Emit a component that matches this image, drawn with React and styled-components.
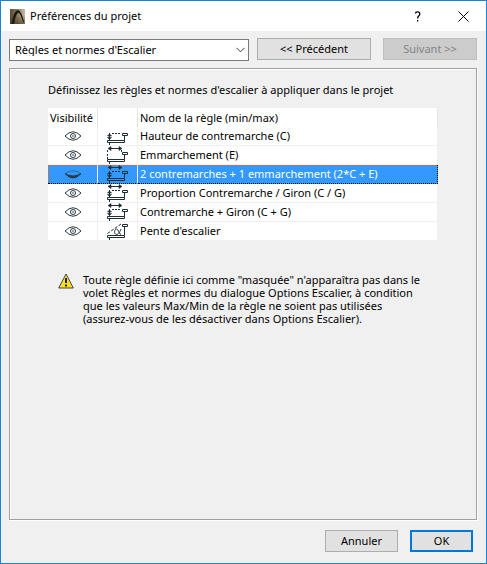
import React, { useState } from "react";
import styled, { createGlobalStyle, css } from "styled-components";

const GlobalStyle = createGlobalStyle`
  * {
    box-sizing: border-box;
  }

  body {
    margin: 0;
    color: #000;
    font-family: "Noto Sans", "Open Sans", sans-serif;
    font-size: 11px;
    line-height: 13px;
  }

  button,
  select {
    font: inherit;
    color: inherit;
  }
`;

const Window = styled.div`
  display: flex;
  flex-direction: column;
  min-height: 100vh;
  border: 1px solid #1883d7;
  background: #f0f0f0;
`;

const TitleBar = styled.header`
  display: flex;
  align-items: center;
  height: 30px;
  padding-left: 9px;
  background: #fff;
`;

const Title = styled.h1`
  flex: 1;
  margin: 0 0 0 5px;
  font-size: 11px;
  line-height: 16px;
  font-weight: 400;
`;

const CaptionButton = styled.button`
  display: flex;
  align-items: center;
  justify-content: center;
  width: 46px;
  height: 30px;
  padding: 0;
  border: 0;
  background: none;
`;

const Toolbar = styled.div`
  display: flex;
  padding: 7px 9px 0 8px;
`;

const SelectBox = styled.div`
  display: grid;
  flex: 1;
  align-items: center;
  margin: 1px 8px 0 0;

  > * {
    grid-area: 1 / 1;
  }

  svg {
    justify-self: end;
    margin-right: 4px;
    pointer-events: none;
  }
`;

const Select = styled.select`
  appearance: none;
  width: 100%;
  height: 22px;
  padding: 0 20px 2px 5px;
  border: 1px solid #7a7a7a;
  border-radius: 0;
  background: #fff;
`;

const Button = styled.button`
  width: ${(p) => p.$width}px;
  height: 22px;
  padding: 0 0 2px;
  border: ${(p) => (p.$primary ? "2px solid #0078d7" : "1px solid #adadad")};
  background: #e1e1e1;

  &:disabled {
    border-color: #bfbfbf;
    background: #ccc;
    color: #838383;
  }

  & + & {
    margin-left: 12px;
  }
`;

const Panel = styled.main`
  flex: 1;
  margin: 7px 9px 0 8px;
  padding: 14px 38px;
  border: 1px solid #a0a0a0;
  box-shadow: inset 1px 1px #fff, 1px 1px #fff;
`;

const Intro = styled.p`
  margin: 0 0 12px;
`;

const Table = styled.table`
  width: 100%;
  table-layout: fixed;
  border-collapse: separate;
  border-spacing: 0;
  background: #fff;
`;

const Head = styled.th`
  width: ${(p) => p.$width};
  height: 19px;
  padding: 0 0 0 ${(p) => p.$indent}px;
  border-right: 1px solid #e5e5e5;
  font-weight: 400;
  text-align: left;
`;

const Cell = styled.td`
  height: 19px;
  padding: 0 0 0 ${(p) => p.$indent}px;
  border-right: 1px solid #f0f0f0;
  border-bottom: 1px solid #f0f0f0;
  line-height: 18px;
  vertical-align: top;

  svg {
    display: block;
  }
`;

const selectedRow = css`
  background: #3399ff;
  color: #fff;

  ${Cell} {
    border-bottom: 1px dotted #000;
    box-shadow: inset 0 1px #997f80;
  }

  ${Cell}:first-child {
    box-shadow: inset 1px 1px #997f80;
  }

  ${Cell}:last-child {
    border-right: 1px dotted #000;
  }
`;

const Row = styled.tr`
  ${(p) => p.$selected && selectedRow}
`;

const EyeButton = styled.button`
  display: block;
  padding: 3px 0 0;
  border: 0;
  background: none;
`;

const Notice = styled.div`
  display: flex;
  gap: 9px;
  padding: 32px 0 0 10px;
`;

const NoticeText = styled.p`
  flex: 1;
  margin: 0;
  white-space: pre-line;
`;

const Footer = styled.footer`
  display: flex;
  justify-content: flex-end;
  padding: 10px 13px 11px;
`;

const RULES = [
  { id: "c", name: "Hauteur de contremarche (C)", rise: true },
  { id: "e", name: "Emmarchement (E)", run: true },
  { id: "2ce", name: "2 contremarches + 1 emmarchement (2*C + E)", rise: true, run: true },
  { id: "cg", name: "Proportion Contremarche / Giron (C / G)", rise: true, run: true },
  { id: "c+g", name: "Contremarche + Giron (C + G)", rise: true, run: true },
  { id: "slope", name: "Pente d'escalier", slope: true },
];

const NOTICE = `Toute règle définie ici comme "masquée" n'apparaîtra pas dans le
volet Règles et normes du dialogue Options Escalier, à condition
que les valeurs Max/Min de la règle ne soient pas utilisées
(assurez-vous de les désactiver dans Options Escalier).`;

function EyeIcon({ hidden }) {
  return (
    <svg width="18" height="12" viewBox="0 0 18 12" fill="none" stroke="#2b3a42">
      {hidden ? (
        <>
          <path d="M1 6Q9 -0.500 17 6" strokeWidth="0.500" />
          <path d="M1 5.500Q9 10.500 17 5.500Q9 14.500 1 5.500Z" fill="#2b3a42" />
        </>
      ) : (
        <>
          <path d="M1 6Q9 -2.500 17 6Q9 14.500 1 6Z" />
          <circle cx="9" cy="6" r="2.500" />
          <circle cx="9" cy="6" r="0.600" strokeWidth="0.600" />
        </>
      )}
    </svg>
  );
}

function StairIcon({ rise, run, slope }) {
  const top = slope ? 2.5 : 6.5;
  return (
    <svg width="22" height="18" viewBox="0 0 22 18" fill="none" stroke="#1f2d35">
      <path d="M0.500 13.500H17.500V15.500H0.500Z" />
      <path d={`M17.500 13.500V${top + 2}M15.500 ${top}H20.500V${top + 2}H15.500Z`} />
      <path d="M2.500 16V18" />
      {rise && (
        <>
          <path d="M5 6.500H14" strokeDasharray="2 1" />
          <path d="M2.500 6V14" />
          <path d="M0.500 9L2.500 7L4.500 9ZM0.500 10.500L2.500 12.500L4.500 10.500Z" fill="#1f2d35" strokeWidth="0.600" />
        </>
      )}
      {run && (
        <>
          <path d="M2 2.500H14" />
          <path d="M4 0.500L1 2.500L4 4.500ZM12 0.500L15 2.500L12 4.500Z" fill="#1f2d35" strokeWidth="0.600" />
        </>
      )}
      {run && !rise && (
        <path d="M0.500 4V6M0.500 8V10M0.500 11V13M14.500 4V6" />
      )}
      {slope && (
        <>
          <path d="M0.500 11.500L14 2" strokeDasharray="3 1.500" />
          <path d="M14 7C12.500 11 11 12.500 9.500 12.500C7 12.500 7 7 9.500 7C11.500 7 12 12.500 14 12.500" />
        </>
      )}
    </svg>
  );
}

function AppIcon() {
  return (
    <svg width="15" height="15" viewBox="0 0 15 15">
      <defs>
        <linearGradient id="bronze" x1="0" y1="0" x2="1" y2="0">
          <stop offset="0" stopColor="#5a4a32" />
          <stop offset="0.550" stopColor="#8f8163" />
          <stop offset="1" stopColor="#c8bea4" />
        </linearGradient>
        <linearGradient id="floor" x1="0" y1="0" x2="0" y2="1">
          <stop offset="0.400" stopColor="#3a2d1a" stopOpacity="0" />
          <stop offset="1" stopColor="#3a2d1a" stopOpacity="0.600" />
        </linearGradient>
      </defs>
      <path d="M0 0H15V15H0Z" fill="url(#bronze)" />
      <path d="M0 0H15V15H0Z" fill="url(#floor)" />
      <path d="M1.500 15Q4 1 8 1Q11.500 2 14 13L13 13.500Q10.500 3.500 8 3.500Q5.500 6 4 15Z" fill="#1c1812" />
    </svg>
  );
}

function WarningIcon() {
  return (
    <svg width="16" height="16" viewBox="0 0 16 16">
      <path d="M8 1L15.300 15H0.700Z" fill="#fbe022" stroke="#3c4650" strokeLinejoin="round" />
      <path d="M8 5V10M8 11.500V13.500" stroke="#222" strokeWidth="2" />
    </svg>
  );
}

export default function App() {
  const [selected, setSelected] = useState("2ce");
  const [hidden, setHidden] = useState(["2ce"]);

  const toggle = (id) =>
    setHidden((ids) => (ids.includes(id) ? ids.filter((i) => i !== id) : [...ids, id]));

  return (
    <Window>
      <GlobalStyle />
      <TitleBar>
        <AppIcon />
        <Title>Préférences du projet</Title>
        <CaptionButton aria-label="Aide">
          <svg width="8" height="11" viewBox="0 0 8 11" fill="none" stroke="#000" strokeWidth="1.300">
            <path d="M2.500 2.500Q2.500 0.800 4.700 0.800T6.800 3Q6.800 4 5.700 5T4.600 7.500M4.600 9V10.500" />
          </svg>
        </CaptionButton>
        <CaptionButton aria-label="Fermer">
          <svg width="11" height="11" viewBox="0 0 11 11" stroke="#000">
            <path d="M0.500 0.500L10.500 10.500M10.500 0.500L0.500 10.500" />
          </svg>
        </CaptionButton>
      </TitleBar>

      <Toolbar>
        <SelectBox>
          <Select aria-label="Page de préférences">
            <option>Règles et normes d'Escalier</option>
          </Select>
          <svg width="9" height="6" viewBox="0 0 9 6" fill="none" stroke="#444">
            <path d="M0.500 0.800L4.500 4.800L8.500 0.800" />
          </svg>
        </SelectBox>
        <Button $width={114}>&lt;&lt; Précédent</Button>
        <Button $width={94} disabled>
          Suivant &gt;&gt;
        </Button>
      </Toolbar>

      <Panel>
        <Intro>Définissez les règles et normes d'escalier à appliquer dans le projet</Intro>
        <Table>
          <thead>
            <tr>
              <Head $width="50px" $indent={2}>Visibilité</Head>
              <Head $width="40px" $indent={0} aria-label="Icône" />
              <Head $width="auto" $indent={2}>Nom de la règle (min/max)</Head>
            </tr>
          </thead>
          <tbody>
            {RULES.map(({ id, name, ...parts }) => (
              <Row key={id} $selected={id === selected} onClick={() => setSelected(id)}>
                <Cell $indent={16}>
                  <EyeButton aria-label={`Visibilité : ${name}`} onClick={() => toggle(id)}>
                    <EyeIcon hidden={hidden.includes(id)} />
                  </EyeButton>
                </Cell>
                <Cell $indent={9}>
                  <StairIcon {...parts} />
                </Cell>
                <Cell $indent={2}>{name}</Cell>
              </Row>
            ))}
          </tbody>
        </Table>
        <Notice>
          <WarningIcon />
          <NoticeText>{NOTICE}</NoticeText>
        </Notice>
      </Panel>

      <Footer>
        <Button $width={73}>Annuler</Button>
        <Button $width={63} $primary>
          OK
        </Button>
      </Footer>
    </Window>
  );
}
